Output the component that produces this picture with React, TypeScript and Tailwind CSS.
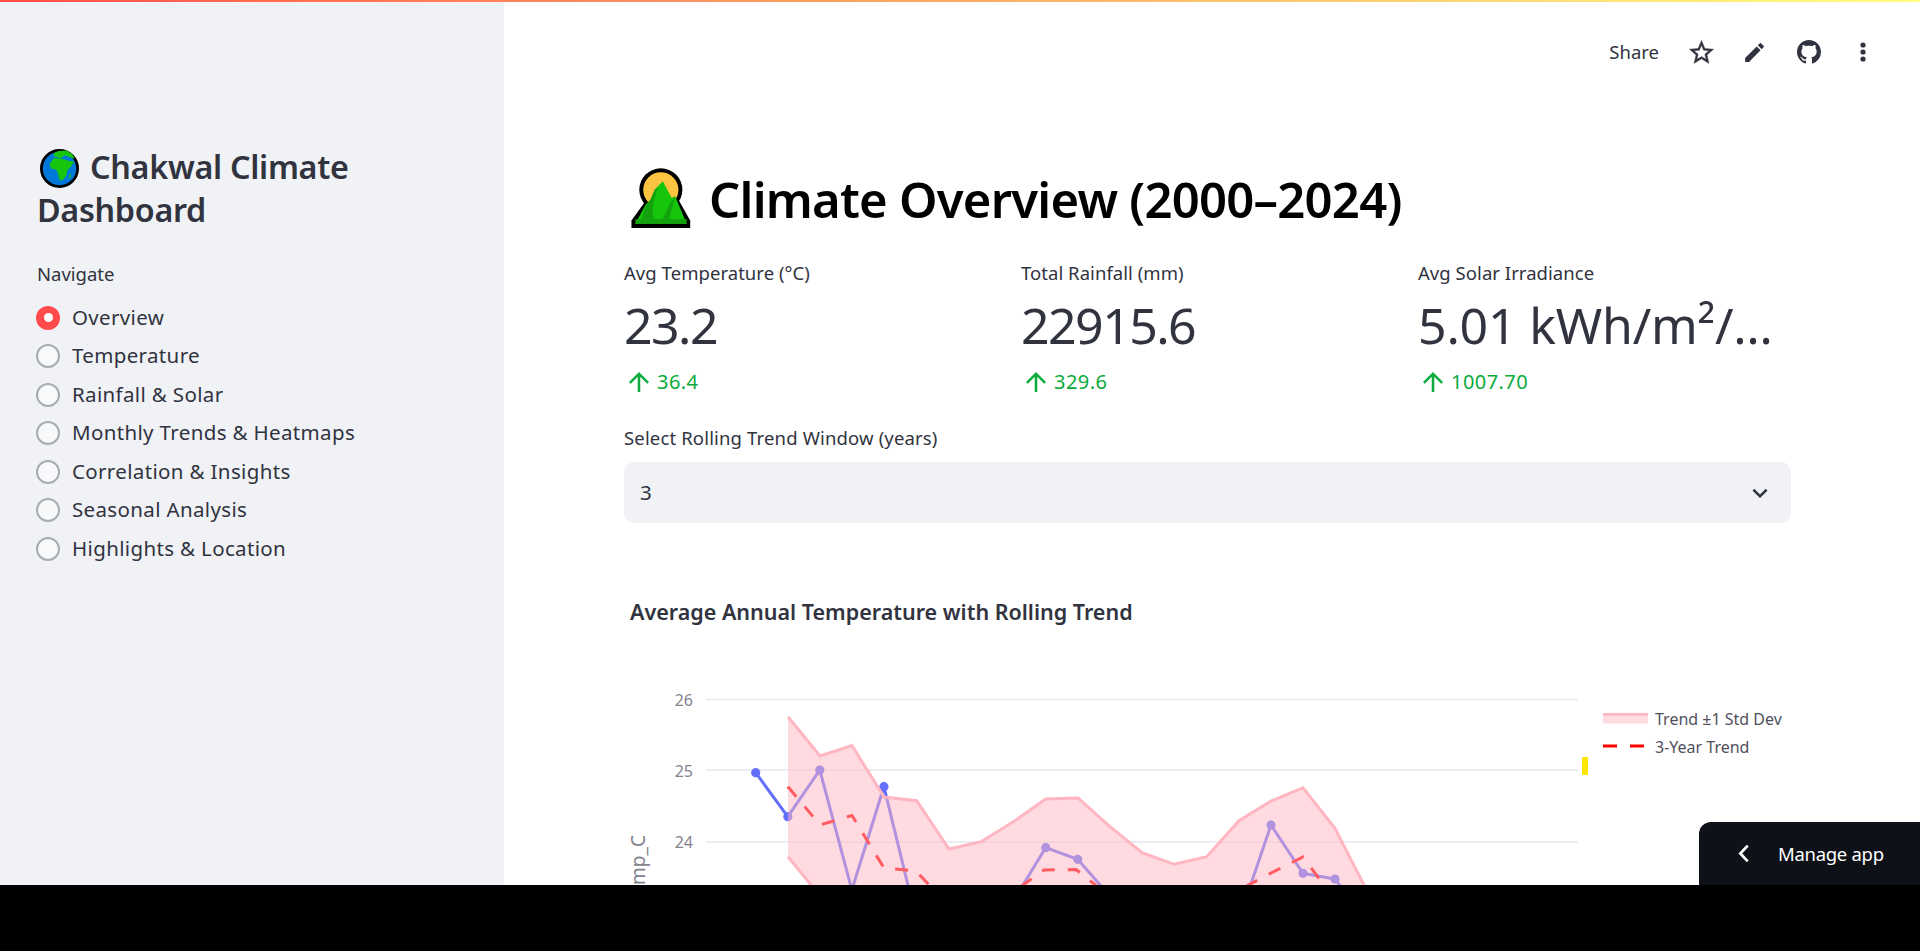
import React from "react";

const FONT = '"Noto Sans", "Open Sans", sans-serif';
const nav = ["Overview", "Temperature", "Rainfall & Solar", "Monthly Trends & Heatmaps", "Correlation & Insights", "Seasonal Analysis", "Highlights & Location"];
const metrics = [
  { label: "Avg Temperature (°C)", value: "23.2", delta: "36.4", track: "tracking-[-1.55px]" },
  { label: "Total Rainfall (mm)", value: "22915.6", delta: "329.6", track: "tracking-[-1.55px]" },
  { label: "Avg Solar Irradiance", value: "5.01 kWh/m²/…", delta: "1007.70", track: "tracking-[-0.2px]" },
];

const pts = (a: number[][]) => a.map((p) => p.join(",")).join(" ");
const temp = [[755.7,772.7],[787.8,816.7],[819.8,770],[851.9,890],[883.9,786.7],[916,918],[948,940],[980,950],[1012,903],[1045.7,847.7],[1077.7,859.3],[1108,894],[1140,930],[1172,940],[1206,940],[1239,919],[1271,825],[1303,873.3],[1335,879],[1367,921]];
const upper = [[788,716.7],[820,756],[852,745.5],[884,797],[916.7,800.7],[949,849],[981,841.7],[1013,822],[1045.7,799],[1078,798],[1110,826.7],[1142,852.7],[1174,864.3],[1206.7,856.7],[1239,820.7],[1271,801],[1303,787.7],[1335,828.3],[1367,891]];
const lower = [[788,856.7],[820,896],[1367,960]];
const trend = [[788,786.7],[820,825],[852,815.5],[884,868],[916,871],[948,905],[980,920],[1012,893],[1044,870],[1076,869.5],[1108,895],[1140,920],[1206,920],[1239,890],[1271,873],[1303,857],[1335,900]];
const band = [...upper, ...[...lower].reverse()];

function Globe() {
  return (
    <svg viewBox="32 34 112 112" className="w-[39px] h-[39px] shrink-0">
      <circle cx="88" cy="90" r="52" fill="#0078d7" stroke="#000" strokeWidth="8" />
      <path d="M70 47 L85 40 L108 38 L124 48 L132 62 L118 58 L104 52 L92 60 L74 56 Z" fill="#16c60c" />
      <path d="M60 76 L72 60 L95 62 L114 68 L130 70 L120 86 L110 96 L108 110 L97 124 L88 124 L83 102 L78 93 L63 90 Z" fill="#16c60c" />
      <path d="M116 108 L120 104 L120 116 L116 120 Z" fill="#16c60c" />
    </svg>
  );
}

function Mountain() {
  return (
    <svg viewBox="30 18 185 190" className="w-[62px] h-[62px] shrink-0">
      <circle cx="122" cy="88" r="66" fill="#000" />
      <path d="M32 205 L32 182 L78 118 L176 118 L212 182 L212 205 Z" fill="#000" />
      <circle cx="122" cy="88" r="54" fill="#fcc440" />
      <path d="M44 192 L76 132 L90 118 L104 86 L128 62 L155 112 L166 108 L201 192 Z" fill="#16c60c" />
      <path d="M60 182 L78 132 L90 118 L104 86 L112 84 L96 140 L100 182 Z" fill="#13a10e" />
      <path d="M126 182 L150 130 L166 108 L146 182 Z" fill="#13a10e" />
      <rect x="44" y="178" width="157" height="14" fill="#13a10e" />
    </svg>
  );
}

function Chart() {
  return (
    <svg viewBox="624 660 1167 225" className="block w-[1167px] h-[225px] mt-[33px]">
      {[699.5, 770, 842].map((y) => (
        <line key={y} x1="706" x2="1578" y1={y} y2={y} stroke="#e6e9f0" strokeWidth="1.5" />
      ))}
      {[["26", 706], ["25", 777], ["24", 848]].map(([t, y]) => (
        <text key={t} x="693" y={y} textAnchor="end" fontSize="16" fill="#83838f" fontFamily={FONT}>{t}</text>
      ))}
      <text transform="translate(645 870) rotate(-90)" textAnchor="middle" fontSize="19" fill="#83838f" fontFamily={FONT}>Temp_C</text>
      <polyline points={pts(temp)} fill="none" stroke="#636efa" strokeWidth="3" />
      {temp.map(([x, y]) => <circle key={x} cx={x} cy={y} r="4.6" fill="#636efa" />)}
      <polyline points={pts(trend)} fill="none" stroke="#ff0000" strokeWidth="3" strokeDasharray="13 13" />
      <polygon points={pts(band)} fill="#ffb6c1" fillOpacity="0.5" />
      <polyline points={pts(upper)} fill="none" stroke="#ffb6c1" strokeWidth="3" />
      <polyline points={pts(lower.slice(0, 2))} fill="none" stroke="#ffb6c1" strokeWidth="3" />
      <rect x="1603" y="713" width="45" height="10.5" fill="#ffdae0" />
      <rect x="1603" y="713" width="45" height="2.5" fill="#ffb6c1" />
      <text x="1655" y="724.5" fontSize="16" fill="#50505c" fontFamily={FONT}>Trend ±1 Std Dev</text>
      <line x1="1603" x2="1644" y1="746" y2="746" stroke="#ff0000" strokeWidth="3" strokeDasharray="14 13" />
      <text x="1655" y="752.5" fontSize="16" fill="#50505c" fontFamily={FONT}>3-Year Trend</text>
      <rect x="1582" y="757" width="6" height="18" fill="#ffe600" />
    </svg>
  );
}

export default function App() {
  return (
    <div className="h-[951px] bg-black overflow-hidden" style={{ fontFamily: FONT }}>
      <div className="relative h-[885px] flex bg-white overflow-hidden text-[#31333f]">
        <div className="absolute top-0 left-0 right-0 h-[2px] bg-gradient-to-r from-[#ff4b4b] to-[#fffd80]" />

        <aside className="w-[504px] shrink-0 bg-[#f0f2f6] pl-[36px] pt-[145px]">
          <h2 className="text-[32.3px] font-semibold leading-[43px] tracking-[-0.3px]">
            <span className="inline-flex items-center align-[-9px] ml-[4px] mr-[11px]"><Globe /></span>
            Chakwal Climate<br /><span className="ml-[1px]">Dashboard</span>
          </h2>
          <div className="mt-[31px] ml-[1px] text-[18.5px] leading-[24px]">Navigate</div>
          <div className="mt-[12.5px] flex flex-col">
            {nav.map((n, i) => (
              <div key={n} className="flex items-center h-[38.5px] gap-[12px]">
                {i === 0 ? (
                  <span className="w-[24px] h-[24px] rounded-full bg-[#ff4b4b] flex items-center justify-center">
                    <span className="w-[9px] h-[9px] rounded-full bg-white" />
                  </span>
                ) : (
                  <span className="w-[24px] h-[24px] rounded-full border-2 border-[#a9abb2] bg-[#f8f9fb]" />
                )}
                <span className="text-[20.5px] tracking-[0.35px] -mt-[1px] whitespace-nowrap">{n}</span>
              </div>
            ))}
          </div>
        </aside>

        <main className="flex-1 min-w-0 relative">
          <header className="h-[104px] flex items-center justify-end">
            <span className="text-[18.5px] mr-[28px]">Share</span>
            <svg viewBox="0 0 24 24" className="w-[29px] h-[29px] mr-[26px]" fill="#31333f" stroke="#31333f" strokeWidth="0.35"><path d="M22 9.24l-7.19-.62L12 2 9.19 8.63 2 9.24l5.46 4.73L5.82 21 12 17.27 18.18 21l-1.63-7.03L22 9.24zM12 15.4l-3.76 2.27 1-4.28-3.32-2.88 4.38-.38L12 6.1l1.71 4.04 4.38.38-3.32 2.88 1 4.28L12 15.4z" /></svg>
            <svg viewBox="0 0 24 24" className="w-[25px] h-[25px] mr-[30px]" fill="#31333f"><path d="M3 17.25V21h3.75L17.81 9.94l-3.75-3.75L3 17.25zM20.71 7.04c.39-.39.39-1.02 0-1.41l-2.34-2.34c-.39-.39-1.02-.39-1.41 0l-1.83 1.83 3.75 3.75 1.83-1.83z" /></svg>
            <svg viewBox="0 0 16 16" className="w-[24px] h-[24px] mr-[39px]" fill="#31333f"><path d="M8 0C3.58 0 0 3.58 0 8c0 3.54 2.29 6.53 5.47 7.59.4.07.55-.17.55-.38 0-.19-.01-.82-.01-1.49-2.01.37-2.53-.49-2.69-.94-.09-.23-.48-.94-.82-1.13-.28-.15-.68-.52-.01-.53.63-.01 1.08.58 1.23.82.72 1.21 1.87.87 2.33.66.07-.52.28-.87.51-1.07-1.78-.2-3.64-.89-3.64-3.95 0-.87.31-1.59.82-2.15-.08-.2-.36-1.02.08-2.12 0 0 .67-.21 2.2.82.64-.18 1.32-.27 2-.27s1.36.09 2 .27c1.53-1.04 2.2-.82 2.2-.82.44 1.1.16 1.92.08 2.12.51.56.82 1.27.82 2.15 0 3.07-1.87 3.75-3.65 3.95.29.25.54.73.54 1.48 0 1.07-.01 1.93-.01 2.2 0 .21.15.46.55.38A8.01 8.01 0 0 0 16 8c0-4.42-3.58-8-8-8z" /></svg>
            <svg viewBox="0 0 6 20" className="w-[6px] h-[20px] mr-[54px]" fill="#31333f"><circle cx="3" cy="3" r="2.6" /><circle cx="3" cy="10" r="2.6" /><circle cx="3" cy="17" r="2.6" /></svg>
          </header>

          <div className="ml-[120px] w-[1167px]">
            <h1 className="mt-[59px] h-[70px] flex items-center text-black text-[49px] leading-[72px] font-semibold tracking-[-0.75px] whitespace-nowrap">
              <span className="mr-[17px] ml-[6px]"><Mountain /></span>
              <span className="mt-[2px]">Climate Overview (2000–2024)</span>
            </h1>

            <div className="mt-[22px] w-[1169px] grid grid-cols-3 gap-[22px]">
              {metrics.map((m) => (
                <div key={m.label} className="min-w-0">
                  <div className="h-[36px] flex items-center text-[18.5px] tracking-[0.05px]">{m.label}</div>
                  <div className={`h-[72px] leading-[69px] text-[50px] whitespace-nowrap ${m.track}`}>{m.value}</div>
                  <div className="h-[38px] flex items-center text-[#09ab3b] text-[20px] tracking-[0.45px]">
                    <svg viewBox="0 0 24 24" className="w-[30px] h-[30px] mr-[3px]" fill="#09ab3b"><path d="M4 12l1.41 1.41L11 7.83V20h2V7.83l5.58 5.59L20 12l-8-8-8 8z" /></svg>
                    {m.delta}
                  </div>
                </div>
              ))}
            </div>

            <div className="mt-[22px] h-[30px] flex items-center text-[18.5px] tracking-[0.15px]">Select Rolling Trend Window (years)</div>
            <div className="mt-[9px] h-[61px] rounded-[10px] bg-[#f0f2f6] flex items-center justify-between pl-[16px] pr-[16px]">
              <span className="text-[20.5px]">3</span>
              <svg viewBox="0 0 24 24" className="w-[30px] h-[30px]" fill="#31333f"><path d="M16.59 8.59L12 13.17 7.41 8.59 6 10l6 6 6-6z" /></svg>
            </div>

            <div className="mt-[74px] ml-[6px] h-[30px] flex items-center text-[21.5px] font-semibold">Average Annual Temperature with Rolling Trend</div>
            <Chart />
          </div>

          <div className="absolute right-0 bottom-0 w-[221px] h-[63px] bg-[#0e1117] rounded-tl-[12px] flex items-center text-white pl-[38px]">
            <svg viewBox="0 0 12 18" className="w-[13px] h-[19px] mr-[28px]" fill="none" stroke="#fff" strokeWidth="2.6"><path d="M10 1.5 L3 9 L10 16.5" /></svg>
            <span className="text-[18.5px] tracking-[-0.3px] whitespace-nowrap">Manage app</span>
          </div>
        </main>
      </div>
    </div>
  );
}
